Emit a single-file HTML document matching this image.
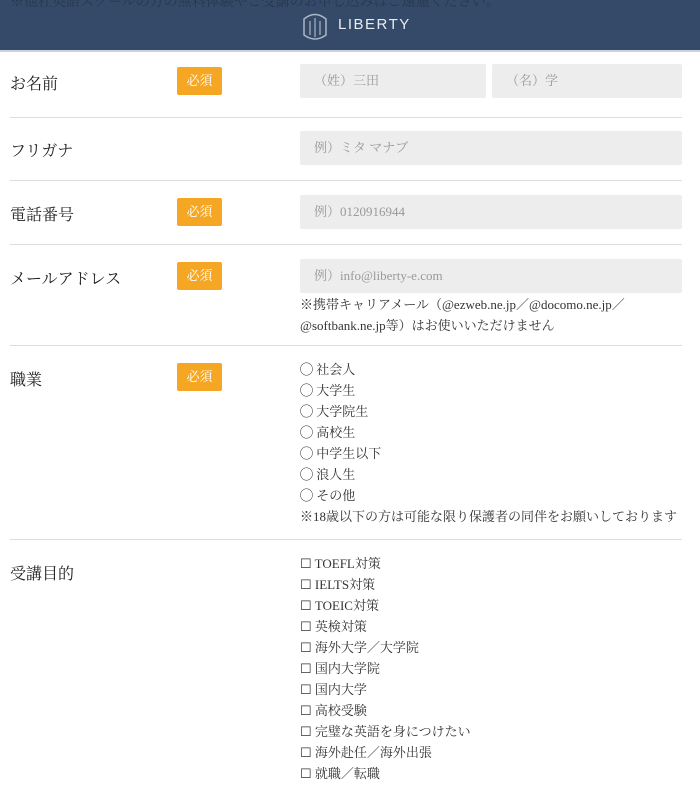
<!DOCTYPE html>
<html><head><meta charset="utf-8"><style>
*{margin:0;padding:0;box-sizing:border-box}
body{width:700px;height:787px;overflow:hidden;background:#fff;font-family:"Liberation Serif","Noto Serif CJK SC",serif;color:#333;position:relative}
.hd{position:absolute;left:0;top:0;width:700px;height:52px;background:#344a68;border-bottom:2px solid #c9d3de}
.hd .t{position:absolute;left:10px;top:-9px;font-size:14px;color:#27384f;white-space:nowrap}
.logo{position:absolute;left:338px;top:16px;color:#e8ecf2;font-family:"Liberation Sans",sans-serif;font-size:15px;letter-spacing:1.5px}
.a{position:absolute;white-space:nowrap}
.lb{font-size:16px;color:#222}
.bd{position:absolute;left:177px;width:45px;height:28px;background:#f5a623;color:#fff;font-size:13px;text-align:center;line-height:28px;border-radius:2px}
.in{position:absolute;height:34px;background:#ededed;border-radius:2px;color:#999;font-size:13px;line-height:34px;padding-left:14px}
.hr{position:absolute;left:10px;width:672px;height:1px;background:#ddd}
.li{font-size:13px;color:#333;line-height:21px}
</style></head><body>
<div class="hd"><div class="t">※他社英語スクールの方の無料体験やご受講のお申し込みはご遠慮ください。</div>
<svg style="position:absolute;left:299px;top:9px" width="32" height="34" viewBox="0 0 32 34"><path d="M5 10 Q16 1 27 10 L27 26 Q16 34 5 26 Z" fill="none" stroke="#aab6c6" stroke-width="1.5"/><path d="M11 12 V26 M16 9 V28 M21 12 V26" stroke="#aab6c6" stroke-width="1.2"/></svg>
<div class="logo">LIBERTY</div></div>

<div class="a lb" style="left:10px;top:71px">お名前</div><div class="bd" style="top:67px">必須</div>
<div class="in" style="left:300px;top:64px;width:186px">（姓）三田</div><div class="in" style="left:492px;top:64px;width:190px">（名）学</div>
<div class="hr" style="top:117px"></div>
<div class="a lb" style="left:10px;top:138px">フリガナ</div>
<div class="in" style="left:300px;top:131px;width:382px">例）ミタ マナブ</div>
<div class="hr" style="top:180px"></div>
<div class="a lb" style="left:10px;top:202px">電話番号</div><div class="bd" style="top:198px">必須</div>
<div class="in" style="left:300px;top:195px;width:382px">例）0120916944</div>
<div class="hr" style="top:244px"></div>
<div class="a lb" style="left:10px;top:266px">メールアドレス</div><div class="bd" style="top:262px">必須</div>
<div class="in" style="left:300px;top:259px;width:382px">例）info@liberty-e.com</div>
<div class="a li" style="left:300px;top:294px">※携帯キャリアメール（@ezweb.ne.jp／@docomo.ne.jp／<br>@softbank.ne.jp等）はお使いいただけません</div>
<div class="hr" style="top:345px"></div>
<div class="a lb" style="left:10px;top:367px">職業</div><div class="bd" style="top:363px">必須</div>
<div class="a li" style="left:300px;top:359px">◯ 社会人<br>◯ 大学生<br>◯ 大学院生<br>◯ 高校生<br>◯ 中学生以下<br>◯ 浪人生<br>◯ その他<br>※18歳以下の方は可能な限り保護者の同伴をお願いしております</div>
<div class="hr" style="top:539px"></div>
<div class="a lb" style="left:10px;top:561px">受講目的</div>
<div class="a li" style="left:300px;top:553px">☐ TOEFL対策<br>☐ IELTS対策<br>☐ TOEIC対策<br>☐ 英検対策<br>☐ 海外大学／大学院<br>☐ 国内大学院<br>☐ 国内大学<br>☐ 高校受験<br>☐ 完璧な英語を身につけたい<br>☐ 海外赴任／海外出張<br>☐ 就職／転職</div>
</body></html>
